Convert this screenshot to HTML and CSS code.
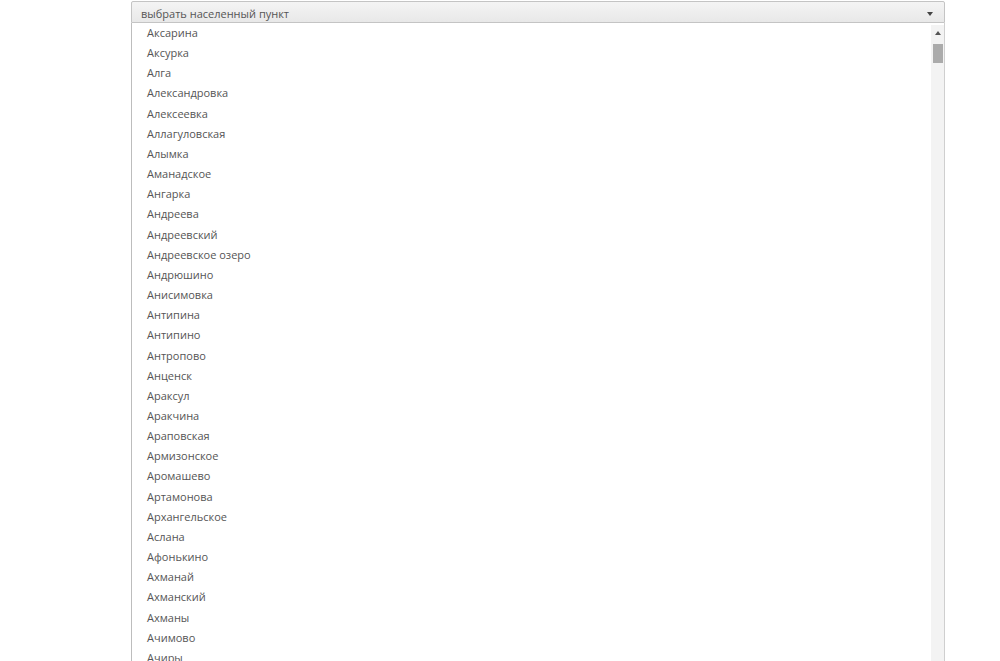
FILE: index.html
```html
<!DOCTYPE html>
<html lang="ru">
<head>
    <meta charset="UTF-8"><title>Выбор населенного пункта</title>
    <link rel="stylesheet" href="styles.css">
</head>
<body>
<div class="pageWrapper">
    <div class="selectBox">
        <span class="selectLabel">выбрать населенный пункт</span>
        <span class="selectArrow"></span>
    </div>
    <div class="dropdown">
        <ul class="optionList">
            <li>Аксарина</li>
            <li>Аксурка</li>
            <li>Алга</li>
            <li>Александровка</li>
            <li>Алексеевка</li>
            <li>Аллагуловская</li>
            <li>Алымка</li>
            <li>Аманадское</li>
            <li>Ангарка</li>
            <li>Андреева</li>
            <li>Андреевский</li>
            <li>Андреевское озеро</li>
            <li>Андрюшино</li>
            <li>Анисимовка</li>
            <li>Антипина</li>
            <li>Антипино</li>
            <li>Антропово</li>
            <li>Анценск</li>
            <li>Араксул</li>
            <li>Аракчина</li>
            <li>Араповская</li>
            <li>Армизонское</li>
            <li>Аромашево</li>
            <li>Артамонова</li>
            <li>Архангельское</li>
            <li>Аслана</li>
            <li>Афонькино</li>
            <li>Ахманай</li>
            <li>Ахманский</li>
            <li>Ахманы</li>
            <li>Ачимово</li>
            <li>Ачиры</li>
        </ul>
        <div class="scrollbar">
            <span class="scrollUp"></span>
            <span class="scrollThumb"></span>
        </div>
    </div>
</div>
</body>
</html>
```

FILE: styles.css
```css
html {
    font-family: "Open Sans", "Noto Sans", sans-serif;
    font-size: 11px;
    color: #555;
}
body {
    margin: 0;
    height: 100vh;
    overflow: hidden;
    background: #fff;
}
.pageWrapper {
    display: flex;
    flex-direction: column;
    margin: 1px 0 0 131px;
    width: 814px;
}
.selectBox {
    display: flex;
    justify-content: space-between;
    align-items: center;
    height: 20px;
    padding: 0 11px 0 9px;
    border: 1px solid #c4c4c4;
    border-radius: 2px 2px 0 0;
    background: linear-gradient(#f4f4f4, #e8e8e8);
    color: #555;
}
.selectLabel {
    line-height: 20px;
    padding-top: 3px;
}
.selectArrow {
    width: 0;
    height: 0;
    border-left: 3.5px solid transparent;
    border-right: 3.5px solid transparent;
    border-top: 4px solid #444;
    margin-top: 3px;
}
.dropdown {
    display: flex;
    border-left: 1px solid #bdbdbd;
    border-right: 1px solid #cfcfcf;
    background: #fff;
}
.optionList {
    flex: 1;
    list-style: none;
    margin: 0;
    padding: 0;
}
.optionList li {
    height: 19.17px;
    line-height: 19.17px;
    padding: 0 0 1px 15px;
    color: #555;
}
.scrollbar {
    display: flex;
    flex-direction: column;
    align-items: center;
    width: 13px;
    margin-top: 2px;
    background: #f3f3f3;
}
.scrollUp {
    width: 0;
    height: 0;
    margin-top: 6px;
    border-left: 3.5px solid transparent;
    border-right: 3.5px solid transparent;
    border-bottom: 4px solid #555;
}
.scrollThumb {
    width: 10px;
    height: 19px;
    margin-top: 9px;
    background: #ababab;
}
```
